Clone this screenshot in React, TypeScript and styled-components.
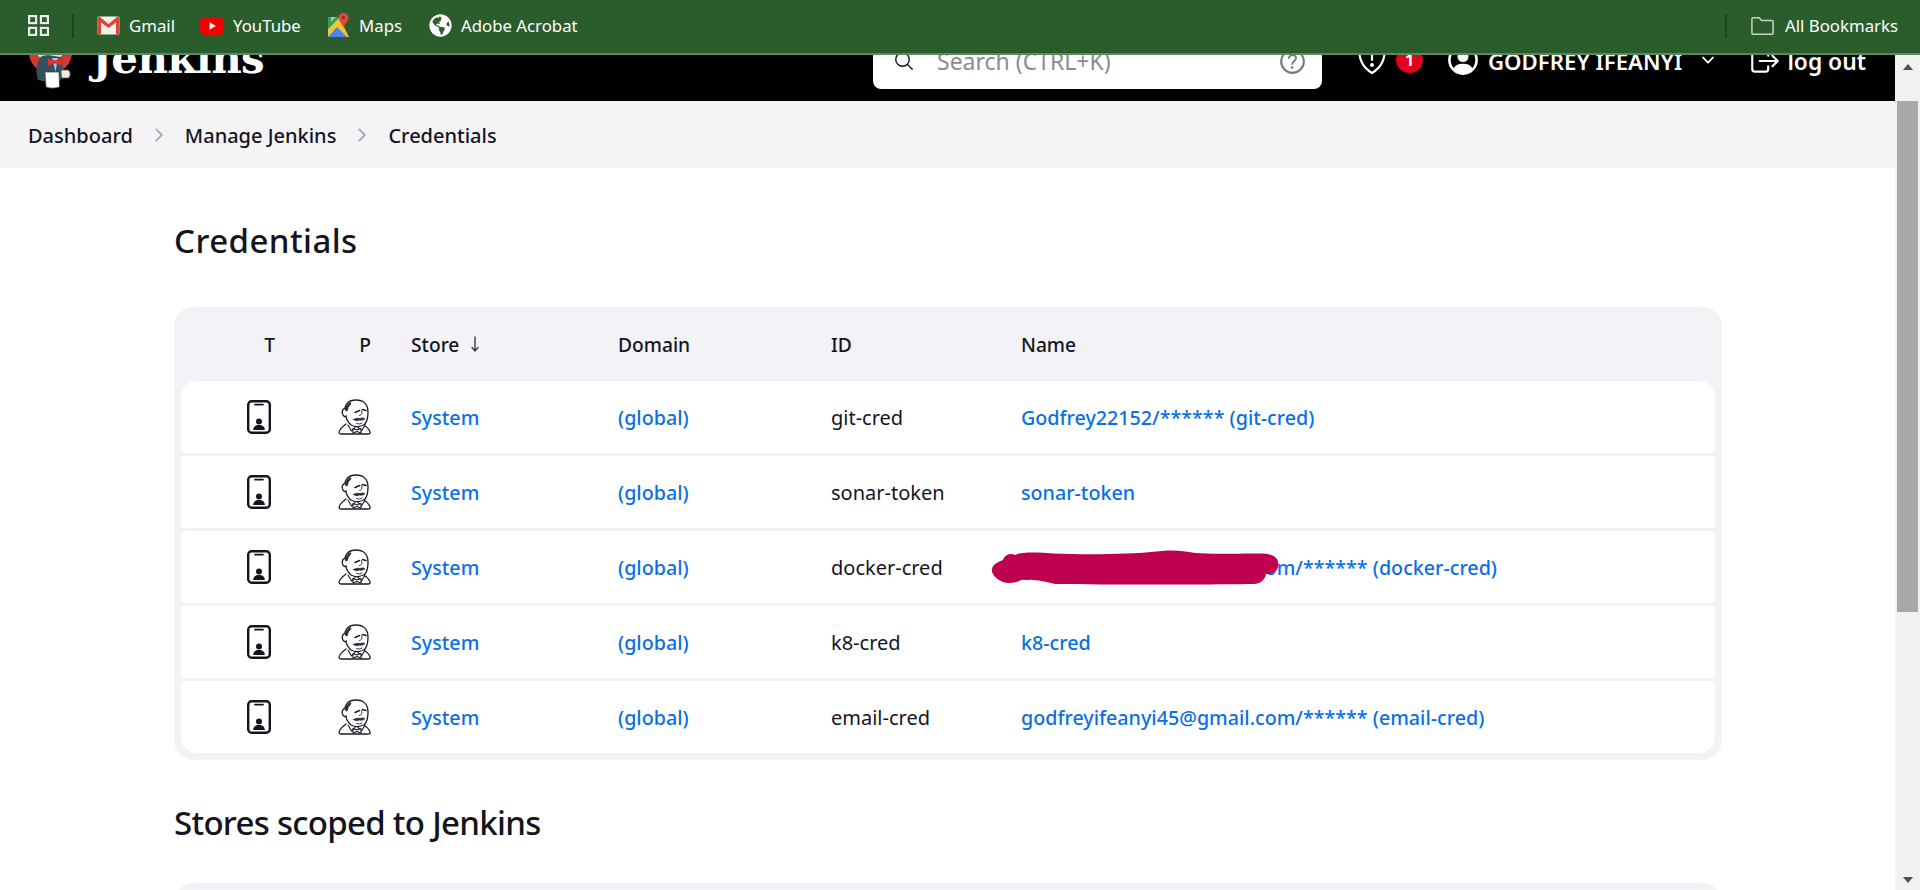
import React from 'react';
import styled, { createGlobalStyle } from 'styled-components';
import {
    IoSearchOutline,
    IoHelpCircleOutline,
    IoChevronDownOutline,
    IoChevronForward,
    IoLogOutOutline,
} from 'react-icons/io5';
import { FaGlobeAmericas } from 'react-icons/fa';

const FONT = '"Noto Sans", "Open Sans", sans-serif';

const GlobalStyle = createGlobalStyle`
    html, body {
        margin: 0;
        padding: 0;
        height: 100%;
        overflow: hidden;
        background: #fff;
        font-family: ${FONT};
    }
    * { box-sizing: border-box; }
`;

const Page = styled.div`
    height: 890px;
    display: flex;
    flex-direction: column;
    overflow: hidden;
`;

/* browser bookmarks bar */
const BookmarkBar = styled.div`
    height: 55px;
    flex: none;
    background: #2a5c2c;
    border-bottom: 2px solid #5b8a5d;
    display: flex;
    align-items: center;
    padding: 0 22px 2px 28px;
    color: #fff;
    font-size: 16.8px;
`;

const BarDivider = styled.div<{ $left: number; $right: number }>`
    width: 2px;
    height: 24px;
    background: #1d4320;
    margin: 0 ${(p) => p.$right}px 0 ${(p) => p.$left}px;
`;

const Bookmark = styled.div<{ $gap: number; $width: number }>`
    display: flex;
    align-items: center;
    gap: ${(p) => p.$gap}px;
    width: ${(p) => p.$width}px;
    white-space: nowrap;
`;

const Spacer = styled.div`
    flex: 1;
`;

const Viewport = styled.div`
    flex: 1;
    min-height: 0;
    display: flex;
`;

const Main = styled.div`
    flex: 1;
    min-width: 0;
    overflow: hidden;
`;

/* scrollbar of the page */
const ScrollTrack = styled.div`
    width: 25px;
    flex: none;
    background: #f1f1f1;
    display: flex;
    flex-direction: column;
    align-items: center;
`;

const ArrowUp = styled.div`
    margin-top: 9px;
    width: 0;
    height: 0;
    border-left: 5px solid transparent;
    border-right: 5px solid transparent;
    border-bottom: 6px solid #505050;
`;

const ArrowDown = styled.div`
    margin-top: auto;
    margin-bottom: 7px;
    width: 0;
    height: 0;
    border-left: 5.5px solid transparent;
    border-right: 5.5px solid transparent;
    border-top: 6px solid #505050;
`;

const Thumb = styled.div`
    width: 21px;
    height: 511px;
    margin-top: 31px;
    background: #a8a8a8;
`;

/* Jenkins header, scrolled partly under the browser bar */
const Header = styled.header`
    height: 46px;
    overflow: hidden;
    background: #000;
    display: flex;
    align-items: flex-end;
`;

const HeaderInner = styled.div`
    flex: none;
    width: 100%;
    height: 80px;
    display: flex;
    align-items: center;
    padding: 0 29px 0 28px;
    color: #fff;
`;

const Brand = styled.div`
    width: 845px;
    flex: none;
    display: flex;
    align-items: center;
`;

const BrandName = styled.div`
    margin-left: 20px;
    font-family: "DejaVu Serif", "Liberation Serif", serif;
    font-weight: 700;
    font-size: 42px;
    letter-spacing: -0.6px;
    line-height: 1;
    margin-top: -4px;
`;

const SearchBox = styled.div`
    width: 449px;
    height: 56px;
    align-self: flex-start;
    margin-top: 12px;
    background: #fff;
    border-radius: 8px;
    display: flex;
    align-items: center;
    padding: 0 13px 0 20px;
    color: #14141f;
`;

const SearchText = styled.div`
    margin-left: 22px;
    flex: 1;
    color: #8b8b94;
    font-size: 23px;
`;

const HelpIcon = styled(IoHelpCircleOutline)`
    color: #75758c;
`;

const ShieldWrap = styled.div`
    margin: 0 0 6px 35px;
    display: flex;
    align-items: center;
`;

const AlertBadge = styled.div`
    width: 27px;
    height: 27px;
    margin: 3px 0 0 9px;
    border-radius: 50%;
    background: #e6001f;
    color: #fff;
    font-size: 16px;
    font-weight: 700;
    display: flex;
    align-items: center;
    justify-content: center;
`;

const UserBlock = styled.div`
    margin-left: 25px;
    display: flex;
    align-items: center;
    font-size: 22.2px;
    font-weight: 600;
    white-space: nowrap;
`;

const UserGlyph = styled.svg`
    margin-bottom: 3px;
`;

const UserName = styled.span`
    margin-left: 10px;
    margin-right: 17px;
`;

const UserChevron = styled(IoChevronDownOutline)`
    margin-bottom: 3px;
`;

const LogoutBlock = styled.div`
    margin-left: auto;
    display: flex;
    align-items: center;
    gap: 5px;
    font-size: 22.8px;
    font-weight: 600;
    white-space: nowrap;
`;

const Breadcrumbs = styled.nav`
    height: 67px;
    background: #f4f4f7;
    display: flex;
    align-items: center;
    padding: 1px 0 0 28px;
    color: #14141f;
    font-size: 20px;
    font-weight: 500;
`;

const Crumb = styled.span`
    white-space: nowrap;
`;

const CrumbArrow = styled(IoChevronForward)`
    color: #a9a9bb;
    margin: 0 16px;
    font-size: 20px;
`;

const Content = styled.main`
    padding: 0 173px 0 174px;
`;

const PageTitle = styled.h1<{ $top: number; $bottom: number; $spacing: number }>`
    margin: ${(p) => p.$top}px 0 ${(p) => p.$bottom}px;
    height: 40px;
    line-height: 40px;
    font-size: 33px;
    font-weight: 500;
    letter-spacing: ${(p) => p.$spacing}px;
    color: #14141f;
`;

const TableCard = styled.div`
    background: #f2f2f7;
    border-radius: 20px;
    padding: 0 7px 7px;
`;

const COLUMNS = '94px 96px 247px 213px 190px 1fr';

const HeadRow = styled.div`
    height: 74px;
    display: grid;
    grid-template-columns: ${COLUMNS};
    align-items: center;
    font-size: 19.2px;
    font-weight: 500;
    color: #14141f;
`;

const Row = styled.div`
    height: 72px;
    display: grid;
    grid-template-columns: ${COLUMNS};
    align-items: center;
    background: #fff;
    border-radius: 4px;
    margin-bottom: 3px;
    font-size: 20px;
    color: #14141f;

    &:nth-child(2) {
        border-top-left-radius: 16px;
        border-top-right-radius: 16px;
    }

    &:last-child {
        margin-bottom: 0;
        border-bottom-left-radius: 16px;
        border-bottom-right-radius: 16px;
    }
`;

const IconCell = styled.div<{ $inset?: number }>`
    display: flex;
    justify-content: flex-end;
    padding-right: ${(p) => p.$inset ?? 0}px;
`;

const HeadLetter = styled.div`
    text-align: right;
`;

const StoreCell = styled.div`
    padding-left: 40px;
    display: flex;
    align-items: center;
    gap: 11px;
`;

const LinkText = styled.a`
    color: #0b6fe4;
    font-size: 19.7px;
    font-weight: 500;
    text-decoration: none;
    white-space: nowrap;
`;

const NameCell = styled.div`
    position: relative;
    min-width: 0;
`;

const RedactWrap = styled.div`
    position: absolute;
    left: -30px;
    top: -5px;
    line-height: 0;
`;

const SecondCard = styled.div`
    height: 120px;
    background: #f2f2f7;
    border-radius: 20px;
`;

const GridIcon = () => (
    <svg width="21" height="21" viewBox="0 0 21 21" fill="none" stroke="#e8efe8" strokeWidth="2.2">
        <rect x="1.1" y="1.1" width="7" height="7" />
        <rect x="12.9" y="1.1" width="7" height="7" />
        <rect x="1.1" y="12.9" width="7" height="7" />
        <rect x="12.9" y="12.9" width="7" height="7" />
    </svg>
);

const GmailIcon = () => (
    <svg width="23" height="19" viewBox="0 0 23 19">
        <rect x="0.5" y="0.5" width="22" height="18" rx="1.5" fill="#f3f1ee" />
        <path d="M0.5 2 L0.5 18.5 L4 18.5 L4 6.5 L11.5 12 L19 6.5 L19 18.5 L22.5 18.5 L22.5 2 L20.5 0.5 L11.5 8 L2.5 0.5 Z" fill="#d9463c" />
    </svg>
);

const YoutubeIcon = () => (
    <svg width="24" height="18" viewBox="0 0 24 18">
        <rect width="24" height="18" rx="5" fill="#f40000" />
        <path d="M9.6 5.2 L15.8 9 L9.6 12.8 Z" fill="#fff" />
    </svg>
);

const MapsIcon = () => (
    <svg width="21" height="25" viewBox="0 0 21 25">
        <path d="M0 4 L12 4 L0 16 Z" fill="#2fa25a" />
        <path d="M0 16 L12 4 L15 12 L21 24 L0 24 Z" fill="#f7c531" />
        <path d="M0 24 L9 14 L19 24 Z" fill="#4a86e8" />
        <path d="M3 4 L8 4 L3 9 Z" fill="#9ccc9f" />
        <path d="M15.5 0 C12.6 0 10.6 2.1 10.6 4.8 C10.6 8 14 10.8 15.5 14.6 C17 10.8 20.4 8 20.4 4.8 C20.4 2.1 18.4 0 15.5 0 Z" fill="#e2483d" />
        <circle cx="15.5" cy="4.8" r="1.7" fill="#8f2a22" />
    </svg>
);

const FolderIcon = () => (
    <svg width="25" height="20" viewBox="0 0 25 20" fill="none" stroke="#c9d4c9" strokeWidth="1.6">
        <path d="M1 18 L1 2 C1 1.4 1.4 1 2 1 L9 1 L11.5 4 L23 4 C23.6 4 24 4.4 24 5 L24 18 C24 18.6 23.6 19 23 19 L2 19 C1.4 19 1 18.6 1 18 Z" />
    </svg>
);

const ShieldIcon = () => (
    <svg width="30" height="34" viewBox="0 0 30 34" fill="none" stroke="#fff" strokeWidth="2.2">
        <path d="M15 2 L28 6.5 C28 18 25 26 15 32 C5 26 2 18 2 6.5 Z" strokeLinejoin="round" />
        <path d="M15 9 L15 19" strokeLinecap="round" />
        <circle cx="15" cy="24" r="0.9" fill="#fff" />
    </svg>
);

const UserIcon = () => (
    <UserGlyph width="30" height="30" viewBox="0 0 30 30">
        <circle cx="15" cy="15" r="13.6" fill="none" stroke="#fff" strokeWidth="2.6" />
        <circle cx="15" cy="11.5" r="5.5" fill="#fff" />
        <path d="M5.500 24 C7 20 11 18.800 15 18.800 C19 18.800 23 20 24.500 24 C22 27 18.500 28.500 15 28.500 C11.500 28.500 8 27 5.500 24 Z" fill="#fff" />
    </UserGlyph>
);

const SortArrow = () => (
    <svg width="10" height="18" viewBox="0 0 10 18" fill="none" stroke="#3c3c48" strokeWidth="1.4" strokeLinecap="round">
        <path d="M5 2 L5 16 M2 12.500 L5 16 L8 12.500" />
    </svg>
);

// drawn in page coordinates, only the lower part shows below the browser bar
const JenkinsLogo = () => (
    <svg width="44" height="68" viewBox="28 27 44 68">
        <circle cx="50.500" cy="52" r="21.500" fill="#d33833" />
        <path d="M38 50 L62 50 L62 56 C58 59 42 59 38 56 Z" fill="#f0d6b7" />
        <path d="M38 80 C35 72 36 62 42 56 L48 55 L60 57 C63 62 64 70 61 80 L52 83 Z" fill="#335061" />
        <path d="M52 58 L58 58 L55.500 72 Z" fill="#9fc6dc" />
        <path d="M48 58 L55 61 L62 58 L62 66 L55 63 L48 66 Z" fill="#e1332d" stroke="#a02a26" strokeWidth="0.5" />
        <path d="M45 72 L59 72 L59.500 87 C56 88.500 49 88.500 46 87 Z" fill="#fff" stroke="#3a3a3a" strokeWidth="0.7" />
        <path d="M61 70 L68 70 C70.500 71 71 76 68.500 78 L61.500 78 Z" fill="#f4ead9" stroke="#555" strokeWidth="0.7" />
    </svg>
);

const PhoneIcon = () => (
    <svg width="24" height="34" viewBox="0 0 24 34" fill="none">
        <rect x="1.2" y="1.2" width="21.600" height="31.600" rx="3.500" stroke="#14141f" strokeWidth="2.400" />
        <path d="M8 4.600 L16 4.600" stroke="#14141f" strokeWidth="1.800" strokeLinecap="round" />
        <circle cx="12" cy="21.500" r="3" fill="#14141f" />
        <path d="M6.200 30 C6.200 26.500 8.500 25 12 25 C15.500 25 17.800 26.500 17.800 30 Z" fill="#14141f" />
    </svg>
);

const ButlerIcon = () => (
    <svg width="33" height="36" viewBox="0 0 33 36" fill="none" stroke="#1c1c26" strokeWidth="1.300" strokeLinecap="round" strokeLinejoin="round">
        <path d="M8 25 C4 28 1.500 30 1 33.500 C1 34.500 2 35 3 35 L30 35 C31.500 35 32.500 34.500 32 33 C31 30 29 28 26 26.500" fill="#fff" />
        <path d="M7 13 C6 5 11 1 18 1 C25 1 30 5 30 13 C30 18 29 23 26.500 25.500 C24 28 17 28.500 13 26 C9.500 23 7.500 19 7 13 Z" fill="#fff" />
        <path d="M7.500 9.500 C5 9.500 3.500 12 4.500 15 C5.500 17.500 7 18 8.500 17" fill="#fff" />
        <path d="M8.500 11 C9 8 10 6 12 4.500" strokeWidth="2.600" stroke="#2c2c36" />
        <path d="M17 13.500 L21.500 11.500 M24.500 10.500 L28 11.500" strokeWidth="1.500" />
        <path d="M23.500 11.500 C24.500 14 24 16 21.500 16.500" strokeWidth="0.900" />
        <path d="M15.500 20.500 C18 19 20.500 19 22 19.500 C24 18.500 26 18.800 27 19.800 C25.500 21 23.500 21.500 21.500 21 C19.500 22 17.500 22 15.500 20.500 Z" fill="#2c2c36" strokeWidth="0.600" />
        <path d="M18.500 24.500 C20.500 25.300 22.500 25 24 24" strokeWidth="0.900" />
        <path d="M10 26 L13.500 32 L17 28.500 M27 26 L23.500 32 L20 28.500" fill="#fff" strokeWidth="1.100" />
        <path d="M15 29.500 L19 31 L23 29.500 L23 34 L19 32.500 L15 34 Z" fill="#fff" strokeWidth="1.100" />
    </svg>
);

const RedactBlob = () => (
    <svg width="288" height="36" viewBox="0 0 288 36">
        <path
            d="M12 11 C14 5 20 4 24 6 C30 3 44 3 62 4.500 C100 6 140 5 160 3 C178 0.500 190 1 204 4 C226 5.500 258 4 272 4.500 C284 5 289 11 287 18 C286 23 281 25 275 25 C274 31 269 35 263 35 C230 35.500 130 36 64 35 C54 33 46 30 30 31 C26 34 18 35 12 33 C4 30 0 24 1 20 C2 15 7 13 12 11 Z"
            fill="#bf0050"
        />
    </svg>
);

interface Credential {
    id: string;
    name: string;
    redacted?: boolean;
}

const credentials: Credential[] = [
    { id: 'git-cred', name: 'Godfrey22152/****** (git-cred)' },
    { id: 'sonar-token', name: 'sonar-token' },
    { id: 'docker-cred', name: 'godfreyifeanyi45@gmail.com/****** (docker-cred)', redacted: true },
    { id: 'k8-cred', name: 'k8-cred' },
    { id: 'email-cred', name: 'godfreyifeanyi45@gmail.com/****** (email-cred)' },
];

const App = () => {
    return (
        <Page>
            <GlobalStyle />
            <BookmarkBar>
                <GridIcon />
                <BarDivider $left={23} $right={23} />
                <Bookmark $gap={9} $width={103}><GmailIcon /><span>Gmail</span></Bookmark>
                <Bookmark $gap={9} $width={128}><YoutubeIcon /><span>YouTube</span></Bookmark>
                <Bookmark $gap={10} $width={101}><MapsIcon /><span>Maps</span></Bookmark>
                <Bookmark $gap={9} $width={170}><FaGlobeAmericas size={23} /><span>Adobe Acrobat</span></Bookmark>
                <Spacer />
                <BarDivider $left={0} $right={24} />
                <Bookmark $gap={11} $width={147}><FolderIcon /><span>All Bookmarks</span></Bookmark>
            </BookmarkBar>
            <Viewport>
                <Main>
                    <Header>
                        <HeaderInner>
                            <Brand>
                                <JenkinsLogo />
                                <BrandName>Jenkins</BrandName>
                            </Brand>
                            <SearchBox>
                                <IoSearchOutline size={22} />
                                <SearchText>Search (CTRL+K)</SearchText>
                                <HelpIcon size={33} />
                            </SearchBox>
                            <ShieldWrap>
                                <ShieldIcon />
                                <AlertBadge>1</AlertBadge>
                            </ShieldWrap>
                            <UserBlock>
                                <UserIcon />
                                <UserName>GODFREY IFEANYI</UserName>
                                <UserChevron size={18} />
                            </UserBlock>
                            <LogoutBlock>
                                <IoLogOutOutline size={34} />
                                log out
                            </LogoutBlock>
                        </HeaderInner>
                    </Header>
                    <Breadcrumbs>
                        <Crumb>Dashboard</Crumb>
                        <CrumbArrow />
                        <Crumb>Manage Jenkins</Crumb>
                        <CrumbArrow />
                        <Crumb>Credentials</Crumb>
                    </Breadcrumbs>
                    <Content>
                        <PageTitle $top={53} $bottom={46} $spacing={0.45}>Credentials</PageTitle>
                        <TableCard>
                            <HeadRow>
                                <HeadLetter>T</HeadLetter>
                                <HeadLetter>P</HeadLetter>
                                <StoreCell>Store <SortArrow /></StoreCell>
                                <div>Domain</div>
                                <div>ID</div>
                                <div>Name</div>
                            </HeadRow>
                            {credentials.map((cred) => (
                                <Row key={cred.id}>
                                    <IconCell $inset={4}><PhoneIcon /></IconCell>
                                    <IconCell><ButlerIcon /></IconCell>
                                    <StoreCell><LinkText>System</LinkText></StoreCell>
                                    <div><LinkText>(global)</LinkText></div>
                                    <div>{cred.id}</div>
                                    <NameCell>
                                        <LinkText>{cred.name}</LinkText>
                                        {cred.redacted && <RedactWrap><RedactBlob /></RedactWrap>}
                                    </NameCell>
                                </Row>
                            ))}
                        </TableCard>
                        <PageTitle $top={43} $bottom={40} $spacing={-0.7}>Stores scoped to Jenkins</PageTitle>
                        <SecondCard />
                    </Content>
                </Main>
                <ScrollTrack>
                    <ArrowUp />
                    <Thumb />
                    <ArrowDown />
                </ScrollTrack>
            </Viewport>
        </Page>
    );
};

export default App;
